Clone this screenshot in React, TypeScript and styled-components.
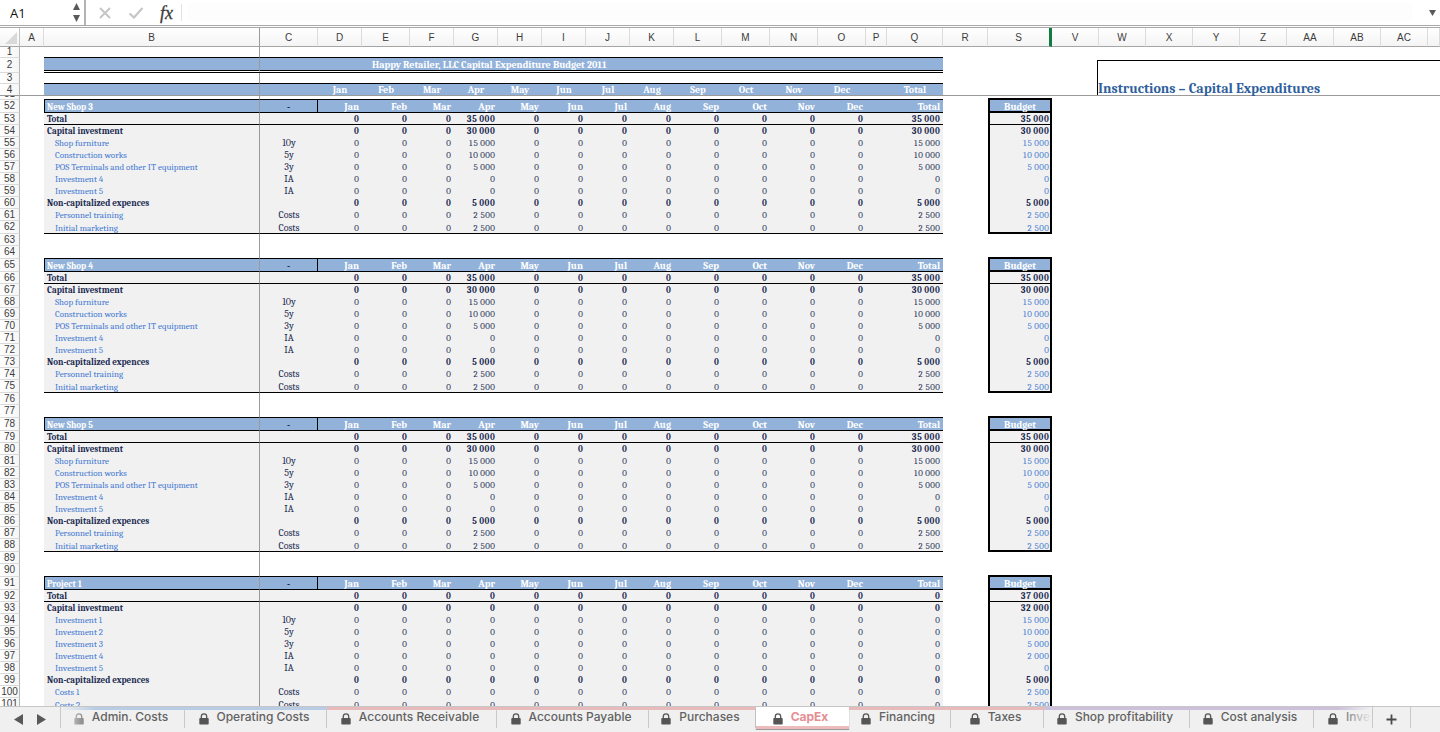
import React from "react";
import styled, { createGlobalStyle, css } from "styled-components";

const SHEET_FONT = 'Cambria, Caladea, "Liberation Serif", serif';
const UI_FONT = '"Liberation Sans", Arial, sans-serif';
const BLUE = "#92b2d9";
const FILL = "#f1f1f1";
const NAVY = "#1b2b52";
const LINK = "#3f78d2";
const FREEZE = "#9a9a9a";

const GlobalStyle = createGlobalStyle`
  *, *::before, *::after { box-sizing: border-box; }
  body { margin: 0; background: #fff; font-family: ${UI_FONT}; }
  button, input { font: inherit; }
`;

const Workbook = styled.div`
  display: flex;
  flex-direction: column;
  height: 100vh;
  overflow: hidden;
`;

/* ---------- formula bar ---------- */

const FormulaBar = styled.header`
  display: flex;
  flex: none;
  align-items: stretch;
  height: 28px;
  background: #fff;
  border-bottom: 3px double #a8a8a8;
`;

const NameBox = styled.div`
  display: flex;
  align-items: center;
  width: 86px;
  padding: 0 4px 0 8px;
  border-right: 2px solid #b4b4b4;
`;

const NameInput = styled.input`
  flex: 1;
  min-width: 0;
  padding: 0 2px;
  border: 0;
  outline: 0;
  background: transparent;
  font: 13px/18px "Open Sans", "Noto Sans", sans-serif;
  color: #111;
`;

const Stepper = styled.div`
  display: flex;
  flex-direction: column;
  justify-content: space-between;
  height: 19px;
`;

const PlainButton = styled.button`
  display: flex;
  flex: none;
  align-items: center;
  justify-content: center;
  padding: 0;
  border: 0;
  background: transparent;
  color: #595959;
  svg { display: block; }
`;

const BarActions = styled.div`
  display: flex;
  align-items: center;
  gap: 16px;
  padding: 0 8px 0 12px;
  border-right: 1px solid #e2e2e2;
  margin: 4px 0;
`;

const FormulaInput = styled.input`
  flex: 1;
  min-width: 0;
  margin: 3px 12px 3px 6px;
  border: 0;
  outline: 0;
  background: #fdfdfd;
`;

const BarToggle = styled(PlainButton)`
  width: 16px;
`;

/* ---------- grid ---------- */

const SheetArea = styled.main`
  flex: 1;
  min-height: 0;
  overflow: hidden;
`;

const Grid = styled.table`
  width: 100%;
  min-width: 1440px;
  table-layout: fixed;
  border-collapse: separate;
  border-spacing: 0;
  font: 10px/11px ${SHEET_FONT};
  color: ${NAVY};
`;

const Row = styled.tr<{ $h: number }>`
  height: ${(p) => p.$h}px;
`;

const ColHead = styled.th<{ $frozen?: boolean; $marked?: boolean }>`
  height: 19px;
  padding: 2px 0 0;
  background: linear-gradient(#fff, #f4f4f4);
  border-bottom: 1px solid #a6a6a6;
  border-right: 1px solid #dcdcdc;
  font: 10px/16px ${UI_FONT};
  color: #3c3c3c;
  ${(p) => p.$frozen && css`border-right-color: ${FREEZE};`}
  ${(p) => p.$marked && css`border-right: 3px solid #107c41;`}
`;

const Corner = styled(ColHead)`
  border-right-color: #c4c4c4;
  svg { display: block; margin: 0 2px 1px auto; }
`;

const RowHead = styled.th<{ $line?: string }>`
  padding: 0;
  overflow: hidden;
  background: linear-gradient(90deg, #fff, #f6f6f6);
  border-right: 1px solid #b4b4b4;
  border-bottom: 1px solid ${(p) => p.$line ?? "#dadada"};
  font: 10px/10px ${UI_FONT};
  color: #3c3c3c;
  text-align: center;
  white-space: nowrap;
`;

const Sliver = styled.div`
  display: flex;
  align-items: flex-end;
  justify-content: center;
  height: 3px;
  overflow: hidden;
`;

type CellProps = {
  $align?: "left" | "center" | "right";
  $bg?: string;
  $color?: string;
  $bold?: boolean;
  $indent?: boolean;
  $bottom?: string;
  $left?: string;
  $right?: string;
};

/* A ruled cell keeps the text on the same baseline by tightening its line. */
const Cell = styled.td<CellProps>`
  padding: 0 ${(p) => (p.$align === "right" ? 3 : 0)}px 0
    ${(p) => (p.$indent ? 11 : p.$align === "left" ? 3 : 0)}px;
  text-align: ${(p) => p.$align ?? "left"};
  vertical-align: bottom;
  white-space: nowrap;
  line-height: ${(p) => (p.$bottom ? 9 : 11)}px;
  background: ${(p) => p.$bg ?? "transparent"};
  background-clip: padding-box;
  color: ${(p) => p.$color ?? "inherit"};
  font-weight: ${(p) => (p.$bold ? 700 : 400)};
  border-bottom: ${(p) => p.$bottom ?? "0"};
  border-left: ${(p) => p.$left ?? "0"};
  border-right: ${(p) => p.$right ?? "0"};
`;

const LabelCell = styled(Cell)`
  font-size: 9px;
`;

const NumberCell = styled(Cell)`
  font-size: 9px;
  font-variant-numeric: tabular-nums;
`;

const BlockName = styled(LabelCell)`
  padding-left: 2px;
`;

const boxed = css`
  border-left: 2px solid #000;
  border-right: 2px solid #000;
`;

const BudgetHead = styled(Cell)`
  ${boxed}
  line-height: 7px;
`;

const BudgetCell = styled(NumberCell)<{ $tight?: boolean }>`
  ${boxed}
  padding-right: 1px;
  ${(p) => p.$tight && css`line-height: 7px;`}
`;

const TitleCell = styled(Cell)`
  padding-left: 54px;
`;

const NoteCell = styled.td`
  padding: 0;
  vertical-align: bottom;
  border-bottom: 1px solid ${FREEZE};
`;

const Note = styled.div`
  display: flex;
  align-items: flex-end;
  height: 35px;
  margin-left: 45px;
  border-top: 1px solid #000;
  border-left: 1px solid #000;
  font: 700 14px/12px ${SHEET_FONT};
  color: #2f5f9c;
  white-space: nowrap;
`;

/* ---------- sheet tabs ---------- */

const TabBar = styled.footer`
  display: flex;
  flex: none;
  height: 26px;
  background: #f0f0f0;
  border-top: 1px solid #c6c6c6;
`;

const TabNav = styled.div`
  display: flex;
  flex: none;
  align-items: center;
  gap: 14px;
  width: 61px;
  padding: 4px 0 0 14px;
  margin-bottom: 4px;
  border-right: 1px solid #c8c8c8;
`;

const Tabs = styled.nav`
  position: relative;
  display: flex;
  flex: 0 1 1311px;
  min-width: 0;
  height: 23px;
  overflow: hidden;
  &::before, &::after {
    content: "";
    position: absolute;
    top: 0;
    bottom: 0;
    z-index: 1;
    pointer-events: none;
  }
  &::before {
    left: 0;
    width: 34px;
    background: linear-gradient(90deg, #f0f0f0, #f0f0f000);
  }
  &::after {
    right: 0;
    width: 34px;
    background: linear-gradient(270deg, #f0f0f0, #f0f0f000);
  }
`;

const Tab = styled.button<{ $w: number; $strip: string; $active?: boolean }>`
  display: flex;
  flex: 0 0 ${(p) => p.$w}px;
  align-items: center;
  justify-content: center;
  gap: 8px;
  height: 21px;
  padding: 0 4px 4px 0;
  border: 0;
  border-top: 3px solid ${(p) => p.$strip};
  background: linear-gradient(#c8c8c8, #c8c8c8) right / 1px 100% no-repeat;
  font: 500 12px/14px Inter, ${UI_FONT};
  color: #626262;
  white-space: nowrap;
  svg { flex: none; margin-top: 4px; color: #555; }
  ${(p) =>
    p.$active &&
    css`
      height: 22px;
      padding: 3px 4px 3px 0;
      border-top: 0;
      border-bottom: 3px solid #ecbcbd;
      background: #fff;
      box-shadow: 0 1px 1px #999;
      font-weight: 700;
      color: #e58e92;
    `}
`;

const AddTab = styled(PlainButton)`
  width: 39px;
  padding-top: 4px;
  margin-bottom: 4px;
  border-left: 1px solid #c8c8c8;
  border-right: 1px solid #c8c8c8;
`;

/* ---------- icons ---------- */

const Triangle = ({ dir, w, h }: { dir: "up" | "down" | "left" | "right"; w: number; h: number }) => {
  const d = {
    up: `M${w / 2} 0L${w} ${h}H0z`,
    down: `M0 0H${w}L${w / 2} ${h}z`,
    left: `M${w} 0V${h}L0 ${h / 2}z`,
    right: `M0 0L${w} ${h / 2}L0 ${h}z`,
  }[dir];
  return (
    <svg width={w} height={h} viewBox={`0 0 ${w} ${h}`} aria-hidden="true">
      <path d={d} fill="currentColor" />
    </svg>
  );
};

const Lock = () => (
  <svg width="10" height="12" viewBox="0 0 10 12" aria-hidden="true">
    <path d="M2.3 5.5V3.6a2.7 2.7 0 0 1 5.4 0v1.9" fill="none" stroke="currentColor" strokeWidth="1.3" />
    <rect x="0.3" y="5" width="9.4" height="6.6" rx="0.8" fill="currentColor" />
  </svg>
);

const Fx = styled.span`
  font: italic 18px/18px "Liberation Serif", serif;
  color: #3a3a3a;
  -webkit-text-stroke: 0.3px currentColor;
`;

/* ---------- data ---------- */

const COLUMNS: [string, number][] = [
  ["A", 24], ["B", 216], ["C", 58], ["D", 44], ["E", 48], ["F", 44], ["G", 44],
  ["H", 44], ["I", 44], ["J", 44], ["K", 44], ["L", 48], ["M", 48], ["N", 48],
  ["O", 48], ["P", 21], ["Q", 56], ["R", 45], ["S", 64], ["V", 47], ["W", 47],
  ["X", 47], ["Y", 47], ["Z", 47], ["AA", 47], ["AB", 47], ["AC", 47],
];

const MONTHS = ["Jan", "Feb", "Mar", "Apr", "May", "Jun", "Jul", "Aug", "Sep", "Oct", "Nov", "Dec"];

type Line = { label: string; term?: string; apr: string; budget: string; bold?: boolean };
type Block = { start: number; name: string; lines: Line[] };

const shopLines: Line[] = [
  { label: "Total", apr: "35 000", budget: "35 000", bold: true },
  { label: "Capital investment", apr: "30 000", budget: "30 000", bold: true },
  { label: "Shop furniture", term: "10y", apr: "15 000", budget: "15 000" },
  { label: "Construction works", term: "5y", apr: "10 000", budget: "10 000" },
  { label: "POS Terminals and other IT equipment", term: "3y", apr: "5 000", budget: "5 000" },
  { label: "Investment 4", term: "IA", apr: "0", budget: "0" },
  { label: "Investment 5", term: "IA", apr: "0", budget: "0" },
  { label: "Non-capitalized expences", apr: "5 000", budget: "5 000", bold: true },
  { label: "Personnel training", term: "Costs", apr: "2 500", budget: "2 500" },
  { label: "Initial marketing", term: "Costs", apr: "2 500", budget: "2 500" },
];

const projectLines: Line[] = [
  { label: "Total", apr: "0", budget: "37 000", bold: true },
  { label: "Capital investment", apr: "0", budget: "32 000", bold: true },
  { label: "Investment 1", term: "10y", apr: "0", budget: "15 000" },
  { label: "Investment 2", term: "5y", apr: "0", budget: "10 000" },
  { label: "Investment 3", term: "3y", apr: "0", budget: "5 000" },
  { label: "Investment 4", term: "IA", apr: "0", budget: "2 000" },
  { label: "Investment 5", term: "IA", apr: "0", budget: "0" },
  { label: "Non-capitalized expences", apr: "0", budget: "5 000", bold: true },
  { label: "Costs 1", term: "Costs", apr: "0", budget: "2 500" },
  { label: "Costs 2", term: "Costs", apr: "0", budget: "2 500" },
];

const BLOCKS: Block[] = [
  { start: 52, name: "New Shop 3", lines: shopLines },
  { start: 65, name: "New Shop 4", lines: shopLines },
  { start: 78, name: "New Shop 5", lines: shopLines },
  { start: 91, name: "Project 1", lines: projectLines },
];

const STRIP = { blue: "#b9cce5", pink: "#e8babb", purple: "#ccc0da" };

const TABS: { name: string; w: number; strip: string; active?: boolean }[] = [
  { name: "Admin. Costs", w: 124, strip: STRIP.blue },
  { name: "Operating Costs", w: 142, strip: STRIP.blue },
  { name: "Accounts Receivable", w: 170, strip: STRIP.pink },
  { name: "Accounts Payable", w: 152, strip: STRIP.pink },
  { name: "Purchases", w: 107, strip: STRIP.pink },
  { name: "CapEx", w: 93, strip: STRIP.pink, active: true },
  { name: "Financing", w: 102, strip: STRIP.pink },
  { name: "Taxes", w: 93, strip: STRIP.pink },
  { name: "Shop profitability", w: 146, strip: STRIP.purple },
  { name: "Cost analysis", w: 124, strip: STRIP.purple },
  { name: "Investments", w: 120, strip: STRIP.purple },
];

const black = "1px solid #000";
const thick = "2px solid #000";
const double = "3px double #000";
const freezeLine = `1px solid ${FREEZE}`;

/* Blank row between blocks; its lower edge is the top rule of the block below. */
const SpacerRow = ({ n, h, rule, sliver }: { n: number; h: number; rule?: boolean; sliver?: boolean }) => (
  <Row $h={h}>
    <RowHead scope="row">{sliver ? <Sliver>{n}</Sliver> : n}</RowHead>
    <Cell />
    <Cell $bottom={rule ? black : undefined} $right={freezeLine} />
    <Cell colSpan={15} $bottom={rule ? black : undefined} />
    <Cell />
    <Cell $bottom={rule ? thick : undefined} />
    <Cell colSpan={9} />
  </Row>
);

const BlockRows = ({ block }: { block: Block }) => (
  <>
    <Row $h={13}>
      <RowHead scope="row">{block.start}</RowHead>
      <Cell />
      <BlockName $align="left" $bg={BLUE} $color="#fff" $bold $left={black} $right={freezeLine} $bottom={black}>
        {block.name}
      </BlockName>
      <Cell $align="center" $bg={BLUE} $bold $right={black} $bottom={black}>-</Cell>
      {MONTHS.map((m) => (
        <Cell key={m} $align="right" $bg={BLUE} $color="#fff" $bold $bottom={black}>{m}</Cell>
      ))}
      <Cell $bg={BLUE} $bottom={black} />
      <Cell $align="right" $bg={BLUE} $color="#fff" $bold $bottom={black}>Total</Cell>
      <Cell />
      <BudgetHead $align="center" $bg={BLUE} $color="#fff" $bold $bottom={thick}>
        Budget
      </BudgetHead>
      <Cell colSpan={9} />
    </Row>
    {block.lines.map((line, i) => {
      const last = i === block.lines.length - 1;
      const rule = i === 0 || last ? black : undefined;
      return (
        <Row key={line.label} $h={last ? 13 : 12}>
          <RowHead scope="row">{block.start + 1 + i}</RowHead>
          <Cell />
          <LabelCell
            $align="left"
            $bg={FILL}
            $bold={line.bold}
            $indent={!line.bold}
            $color={line.bold ? undefined : LINK}
            $right={freezeLine}
            $bottom={rule}
          >
            {line.label}
          </LabelCell>
          <Cell $align="center" $bg={FILL} $bottom={rule}>{line.term}</Cell>
          {MONTHS.map((m) => (
            <NumberCell key={m} $align="right" $bg={FILL} $bold={line.bold} $bottom={rule}>
              {m === "Apr" ? line.apr : "0"}
            </NumberCell>
          ))}
          <Cell $bg={FILL} $bottom={rule} />
          <NumberCell $align="right" $bg={FILL} $bold={line.bold} $bottom={rule}>{line.apr}</NumberCell>
          <Cell />
          <BudgetCell
            $align="right"
            $bg={FILL}
            $bold={line.bold}
            $color={line.bold ? undefined : LINK}
            $bottom={last ? thick : rule}
            $tight={last}
          >
            {line.budget}
          </BudgetCell>
          <Cell colSpan={9} />
        </Row>
      );
    })}
    <SpacerRow n={block.start + 11} h={12} />
    <SpacerRow n={block.start + 12} h={13} rule />
  </>
);

export default function App() {
  return (
    <Workbook>
      <GlobalStyle />
      <FormulaBar>
        <NameBox>
          <NameInput aria-label="Name box" defaultValue="A1" />
          <Stepper>
            <PlainButton aria-label="Previous name"><Triangle dir="up" w={7} h={7} /></PlainButton>
            <PlainButton aria-label="Next name"><Triangle dir="down" w={7} h={7} /></PlainButton>
          </Stepper>
        </NameBox>
        <BarActions>
          <PlainButton aria-label="Cancel">
            <svg width="14" height="12" viewBox="0 0 14 12">
              <path d="M2 1l10 10M12 1L2 11" stroke="#c6c6c6" strokeWidth="2" fill="none" />
            </svg>
          </PlainButton>
          <PlainButton aria-label="Enter">
            <svg width="16" height="12" viewBox="0 0 16 12">
              <path d="M1.5 6.5l4.5 4L14.5 1" stroke="#c6c6c6" strokeWidth="2.2" fill="none" />
            </svg>
          </PlainButton>
          <PlainButton aria-label="Insert function"><Fx>fx</Fx></PlainButton>
        </BarActions>
        <FormulaInput aria-label="Formula" />
        <BarToggle aria-label="Expand formula bar"><Triangle dir="down" w={7} h={6} /></BarToggle>
      </FormulaBar>

      <SheetArea>
        <Grid>
          <colgroup>
            <col style={{ width: 20 }} />
            {COLUMNS.map(([name, w]) => (
              <col key={name} style={{ width: w }} />
            ))}
            <col />
          </colgroup>
          <thead>
            <tr>
              <Corner aria-label="Select all">
                <svg width="12" height="12" viewBox="0 0 12 12"><path d="M12 0v12H0z" fill="#d9d9d9" /></svg>
              </Corner>
              {COLUMNS.map(([name]) => (
                <ColHead key={name} scope="col" $frozen={name === "B"} $marked={name === "S"}>{name}</ColHead>
              ))}
              <ColHead />
            </tr>
          </thead>
          <tbody>
            <Row $h={11}>
              <RowHead scope="row">1</RowHead>
              <Cell />
              <Cell $right={freezeLine} $bottom={black} />
              <Cell colSpan={15} $bottom={black} />
              <Cell colSpan={11} />
            </Row>
            <Row $h={15}>
              <RowHead scope="row">2</RowHead>
              <Cell />
              <Cell $bg={BLUE} $right={freezeLine} $bottom={double} />
              <Cell $bg={BLUE} $bottom={double} />
              <TitleCell colSpan={14} $align="left" $bg={BLUE} $color="#fff" $bold $bottom={double}>
                Happy Retailer, LLC Capital Expenditure Budget 2011
              </TitleCell>
              <Cell colSpan={2} />
              <NoteCell colSpan={9} rowSpan={3}>
                <Note>Instructions – Capital Expenditures</Note>
              </NoteCell>
            </Row>
            <Row $h={11}>
              <RowHead scope="row">3</RowHead>
              <Cell />
              <Cell $right={freezeLine} $bottom={black} />
              <Cell colSpan={15} $bottom={black} />
              <Cell colSpan={2} />
            </Row>
            <Row $h={12}>
              <RowHead scope="row" $line={FREEZE}>4</RowHead>
              <Cell $bottom={freezeLine} />
              <Cell $bg={BLUE} $right={freezeLine} $bottom={freezeLine} />
              <Cell $bg={BLUE} $bottom={freezeLine} />
              {MONTHS.map((m) => (
                <Cell key={m} $align="center" $bg={BLUE} $color="#fff" $bold $bottom={freezeLine}>{m}</Cell>
              ))}
              <Cell $bg={BLUE} $bottom={freezeLine} />
              <Cell $align="center" $bg={BLUE} $color="#fff" $bold $bottom={freezeLine}>Total</Cell>
              <Cell colSpan={2} $bottom={freezeLine} />
            </Row>
            <SpacerRow n={51} h={4} rule sliver />
            {BLOCKS.map((b) => (
              <BlockRows key={b.start} block={b} />
            ))}
          </tbody>
        </Grid>
      </SheetArea>

      <TabBar>
        <TabNav>
          <PlainButton aria-label="Scroll tabs left"><Triangle dir="left" w={9} h={11} /></PlainButton>
          <PlainButton aria-label="Scroll tabs right"><Triangle dir="right" w={9} h={11} /></PlainButton>
        </TabNav>
        <Tabs aria-label="Sheets">
          {TABS.map((t) => (
            <Tab key={t.name} $w={t.w} $strip={t.strip} $active={t.active}>
              <Lock />
              {t.name}
            </Tab>
          ))}
        </Tabs>
        <AddTab aria-label="Add sheet">
          <svg width="11" height="11" viewBox="0 0 11 11">
            <path d="M5.5 0.5v10M0.5 5.5h10" stroke="#4a4a4a" strokeWidth="1.8" />
          </svg>
        </AddTab>
      </TabBar>
    </Workbook>
  );
}
